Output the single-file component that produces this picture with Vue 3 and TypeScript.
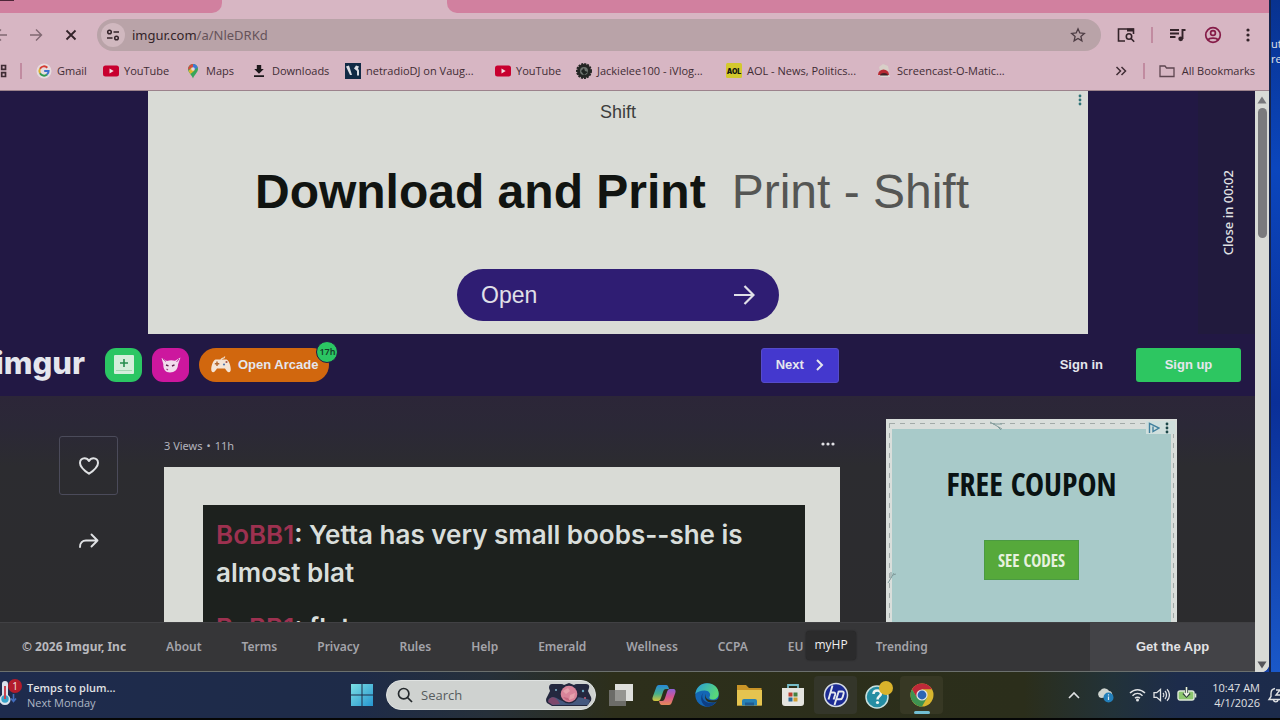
<script setup lang="ts">
import { ref } from 'vue'

interface Bookmark {
  icon: string
  label: string
}

const address = ref<string>('')
const query = ref<string>('')

const bookmarks: Bookmark[] = [
  { icon: 'google', label: 'Gmail' },
  { icon: 'youtube', label: 'YouTube' },
  { icon: 'maps', label: 'Maps' },
  { icon: 'download', label: 'Downloads' },
  { icon: 'netradio', label: 'netradioDJ on Vaug...' },
  { icon: 'youtube', label: 'YouTube' },
  { icon: 'vlog', label: 'Jackielee100 - iVlog...' },
  { icon: 'aol', label: 'AOL - News, Politics...' },
  { icon: 'screencast', label: 'Screencast-O-Matic...' },
]

const footerLinks: string[] = [
  'About', 'Terms', 'Privacy', 'Rules', 'Help', 'Emerald', 'Wellness', 'CCPA', 'EU', 'Trending',
]
</script>

<template>
  <div class="desktop">
    <div class="workspace">
      <section class="browser">
        <div class="tabs">
          <div class="tab tab-left"><span class="tab-mark"></span></div>
          <div class="tab-active"></div>
          <div class="tab tab-rest"></div>
        </div>

        <div class="toolbar">
          <button class="tool back dim" aria-label="Back">
            <svg width="16" height="16" viewBox="0 0 16 16" fill="none" stroke="currentColor" stroke-width="1.4"><path d="M14 8H3M8 2.500L2.500 8L8 13.500" /></svg>
          </button>
          <button class="tool dim" aria-label="Forward">
            <svg width="16" height="16" viewBox="0 0 16 16" fill="none" stroke="currentColor" stroke-width="1.4"><path d="M2 8h11M8 2.500L13.500 8L8 13.500" /></svg>
          </button>
          <button class="tool" aria-label="Stop loading">
            <svg width="14" height="14" viewBox="0 0 14 14" fill="none" stroke="currentColor" stroke-width="1.800"><path d="M2.500 2.500l9 9M11.500 2.500l-9 9" /></svg>
          </button>
          <div class="omnibox">
            <button class="site-info" aria-label="Site information">
              <svg width="14" height="14" viewBox="0 0 14 14" fill="none" stroke="currentColor" stroke-width="1.500"><circle cx="3.500" cy="4" r="1.800" /><path d="M7.500 4H13M1 10h5.500" /><circle cx="10.500" cy="10" r="1.800" /></svg>
            </button>
            <label class="url">
              <span class="url-text">imgur.com<i>/a/NleDRKd</i></span>
              <input v-model="address" type="text" aria-label="Address and search bar" />
            </label>
            <button class="star" aria-label="Bookmark this page">
              <svg width="16" height="16" viewBox="0 0 16 16" fill="none" stroke="currentColor" stroke-width="1.300" stroke-linejoin="miter"><path d="M8 1.800l1.800 4.200 4.500.4-3.400 3 1 4.500L8 11.500l-3.900 2.400 1-4.500-3.400-3 4.500-.4z" /></svg>
            </button>
          </div>
          <button class="tool lens" aria-label="Search this page">
            <svg width="18" height="16" viewBox="0 0 18 16" fill="none" stroke="currentColor" stroke-width="1.600"><path d="M8 14H1.500V2H16.500V7" /><path d="M10 1.500h7v3h-7z" fill="currentColor" stroke="none" /><circle cx="12" cy="9.500" r="2.700" /><path d="M14 11.500l3.200 3.200" /></svg>
          </button>
          <span class="divider"></span>
          <button class="tool" aria-label="Media controls">
            <svg width="17" height="14" viewBox="0 0 17 14" fill="none" stroke="currentColor" stroke-width="1.900"><path d="M1 2h9M1 5.500h9M1 9h5.500M13.500 11V2h3" /><circle cx="11.700" cy="10.800" r="2.400" fill="currentColor" stroke="none" /></svg>
          </button>
          <button class="tool profile" aria-label="Profile">
            <svg width="18" height="18" viewBox="0 0 18 18" fill="none" stroke="currentColor" stroke-width="1.700"><circle cx="9" cy="9" r="7.300" /><circle cx="9" cy="7" r="2.400" /><path d="M4 14c1.500-2.500 8.500-2.500 10 0" /></svg>
          </button>
          <button class="tool" aria-label="Menu">
            <svg width="4" height="16" viewBox="0 0 4 16" fill="currentColor"><circle cx="2" cy="3" r="1.600" /><circle cx="2" cy="8" r="1.600" /><circle cx="2" cy="13" r="1.600" /></svg>
          </button>
        </div>

        <nav class="bookmarks">
          <button class="apps" aria-label="Apps">
            <svg width="14" height="14" viewBox="0 0 14 14" fill="none" stroke="currentColor" stroke-width="1.700"><path d="M1.500 1.500h3.800v3.800H1.500zM8.700 1.500h3.800v3.800H8.700zM1.500 8.700h3.800v3.800H1.500zM8.700 8.700h3.800v3.800H8.700z" /></svg>
          </button>
          <span class="divider first"></span>
          <div class="marks">
            <a v-for="(b, i) in bookmarks" :key="i" href="#" class="mark">
              <svg v-if="b.icon === 'google'" width="16" height="16" viewBox="0 0 16 16"><circle cx="8" cy="8" r="7.500" fill="#e6dcdf" /><g fill="none" stroke-width="2"><path d="M11.300 4.700A4.600 4.600 0 0 0 4 5.700" stroke="#d53b32" /><path d="M4 5.700a4.600 4.600 0 0 0 0 4.600" stroke="#dfb12c" /><path d="M4 10.300a4.600 4.600 0 0 0 7 1.200" stroke="#2f9a50" /><path d="M11 11.500A4.500 4.500 0 0 0 12.600 8H8.200" stroke="#3b72d0" /></g></svg>
              <svg v-else-if="b.icon === 'youtube'" width="16" height="16" viewBox="0 0 16 16"><rect x="0" y="2.500" width="16" height="11" rx="2.500" fill="#c8002f" /><path d="M6.500 5.500v5L10.700 8z" fill="#f1dfe2" /></svg>
              <svg v-else-if="b.icon === 'maps'" width="16" height="16" viewBox="0 0 16 16"><path d="M8 15.500C7 12 3 9.500 3 6a5 5 0 0 1 10 0c0 3.500-4 6-5 9.500z" fill="#36a55a" /><path d="M3.200 7A5 5 0 0 1 8 1v3z" fill="#d74a3d" /><path d="M8 1a5 5 0 0 1 4.700 3.500L8 8z" fill="#3f78d4" /><path d="M3.500 8l3-3.500 3 3L5.500 11z" fill="#dfb72e" /><circle cx="8" cy="6" r="1.800" fill="#e9d8dd" /></svg>
              <svg v-else-if="b.icon === 'download'" width="16" height="16" viewBox="0 0 16 16" fill="#1d191c"><path d="M5.800 2h4.400v4h2.600L8 10.800 3.200 6h2.600zM3 12.300h10V14H3z" /></svg>
              <svg v-else-if="b.icon === 'netradio'" width="16" height="16" viewBox="0 0 16 16"><path d="M0 0h16v16H0z" fill="#102a45" /><path d="M1 3.500l3-1 3 9.500H5zM9 5.500l2-3 3 1-1 2 1 2v5h-2V8z" fill="#d9dce2" /></svg>
              <svg v-else-if="b.icon === 'vlog'" width="16" height="16" viewBox="0 0 16 16"><circle cx="8" cy="8" r="7" fill="#252725" stroke="#252725" stroke-width="2" stroke-dasharray="2 1" /><circle cx="8" cy="8" r="4" fill="#6e7570" /><path d="M5 8l3-3 1 3 3 1-4 3z" fill="#202522" /></svg>
              <svg v-else-if="b.icon === 'aol'" width="16" height="16" viewBox="0 0 16 16"><rect width="16" height="15" rx="1.500" fill="#d3c92d" /><text x="8" y="10.500" text-anchor="middle" class="aol-text">AOL</text></svg>
              <svg v-else width="16" height="16" viewBox="0 0 16 16"><path d="M3 4l4-3 5 2 1 5H4z" fill="#d8cfc8" /><path d="M2 12a5.500 5.500 0 0 1 11 0z" fill="#b82932" /><path d="M4 13a4 3 0 0 1 8 0z" fill="#402226" /><path d="M3 12.500h11V14H5z" fill="#d9d6d2" /></svg>
              <span>{{ b.label }}</span>
            </a>
          </div>
          <button class="more" aria-label="More bookmarks">
            <svg width="12" height="10" viewBox="0 0 12 10" fill="none" stroke="currentColor" stroke-width="1.500"><path d="M1.500 1l4 4-4 4M6.500 1l4 4-4 4" /></svg>
          </button>
          <span class="divider"></span>
          <a href="#" class="mark all">
            <svg width="16" height="14" viewBox="0 0 16 14" fill="none" stroke="#5e4650" stroke-width="1.300"><path d="M1 2h5l1.500 2H15v8.500H1z" /></svg>
            <span>All Bookmarks</span>
          </a>
        </nav>

        <div class="viewport">
          <main class="page">
            <div class="banner">
              <div class="ad">
                <span class="ad-brand">Shift</span>
                <svg class="ad-menu" width="4" height="12" viewBox="0 0 4 12" fill="#2f7377"><circle cx="2" cy="2" r="1.400" /><circle cx="2" cy="6" r="1.400" /><circle cx="2" cy="10" r="1.400" /></svg>
                <h2><b>Download and Print</b><span>Print - Shift</span></h2>
                <button class="open">
                  <span>Open</span>
                  <svg width="22" height="20" viewBox="0 0 22 20" fill="none" stroke="currentColor" stroke-width="2.200"><path d="M1 10h19M11.500 1l9 9-9 9" /></svg>
                </button>
              </div>
              <div class="close-panel"><button class="close-ad">Close in 00:02</button></div>
            </div>

            <header class="site-nav">
              <a href="#" class="logo">imgur</a>
              <button class="square post-new" aria-label="New post">
                <svg width="20" height="20" viewBox="0 0 20 20"><rect width="20" height="19" rx="1" fill="#d4eedb" /><path d="M10 4v8M6 8h8" stroke="#258c4d" stroke-width="1.600" /><path d="M2 15.500h16" stroke="#a6d6b4" /></svg>
              </button>
              <button class="square cat" aria-label="Pets">
                <svg width="20" height="16" viewBox="0 0 20 16"><path d="M.5 1l5.500 3c2.500-1 5.500-1 8-.2L19.500.5 17 7.500c0 5-3.500 8-8 8S2 12 2.300 7z" fill="#f1dcec" /><path d="M5 8l2.500.8M11 9l2.500-1.200" stroke="#62224f" stroke-width="1.400" /><path d="M5.500 12l1.500 1" stroke="#8f4b80" stroke-width="1.100" /><path d="M2 2l3 2.500M18 2l-2.500 3" stroke="#b53b9d" /></svg>
              </button>
              <button class="arcade">
                <svg width="20" height="18" viewBox="0 0 20 18"><path d="M10 4c0-3 4-1 3.500-3.500" fill="none" stroke="#f2dec9" stroke-width="1.300" /><path d="M4.500 3.500h11c3 1 5 9 4 11.500-1.500 3-4 0-5.500-2.500H6C4.500 15 2 18 .5 15-.5 12.500 1.500 4.500 4.500 3.500z" fill="#f4e4d6" /><path d="M6 5.500v4.500M3.800 7.700h4.500" stroke="#b36931" stroke-width="1.500" /><circle cx="13" cy="8.500" r="1.100" fill="#5276ad" /><circle cx="15.500" cy="6" r="1.100" fill="#a85549" /></svg>
                <span>Open Arcade</span>
                <em>17h</em>
              </button>
              <button class="next">Next
                <svg width="8" height="12" viewBox="0 0 8 12" fill="none" stroke="currentColor" stroke-width="2"><path d="M1 1l5 5-5 5" /></svg>
              </button>
              <a href="#" class="sign-in">Sign in</a>
              <button class="sign-up">Sign up</button>
            </header>

            <div class="content">
              <aside class="engage">
                <button class="heart" aria-label="Favorite">
                  <svg width="22" height="20" viewBox="0 0 22 20" fill="none" stroke="currentColor" stroke-width="2" stroke-linejoin="round"><path d="M11 17.800C7 15 2 11.300 2 6.900 2 4.200 4 2.200 6.500 2.200c2 0 3.500 1.100 4.500 2.800 1-1.700 2.500-2.800 4.500-2.800C18 2.200 20 4.200 20 6.900c0 4.400-5 8.100-9 10.900z" /></svg>
                </button>
                <button class="share" aria-label="Share">
                  <svg width="20" height="16" viewBox="0 0 20 16" fill="none" stroke="currentColor" stroke-width="1.900" stroke-linecap="round" stroke-linejoin="round"><path d="M1 14c0-4 2.500-6.500 6-6.500h11.500M12.500 1.500l6 6-6 6" /></svg>
                </button>
              </aside>
              <article class="post">
                <div class="meta">
                  <span class="stats"><span>3 Views</span><span>•</span><span>11h</span></span>
                  <button class="dots" aria-label="Post options"><svg width="14" height="4" viewBox="0 0 14 4" fill="currentColor"><circle cx="2" cy="2" r="1.600" /><circle cx="7" cy="2" r="1.600" /><circle cx="12" cy="2" r="1.600" /></svg></button>
                </div>
                <div class="frame">
                  <div class="chat">
                    <p><b>BoBB1</b>: Yetta has very small boobs--she is almost blat</p>
                    <p><b>BoBB1</b>: flat</p>
                  </div>
                </div>
              </article>
              <aside class="coupon">
                <svg class="scissor top" width="16" height="10" viewBox="0 0 16 10" fill="none" stroke="#819c9c"><path d="M1 1l12 7M4 3l9 0M9 6l3 3" /></svg>
                <svg class="scissor side" width="10" height="16" viewBox="0 0 10 16" fill="none" stroke="#819c9c"><path d="M1 14l6-10M4 9V3M6 6l3-1" /></svg>
                <div class="choices">
                  <svg width="12" height="12" viewBox="0 0 12 12" fill="none" stroke="#42809e" stroke-width="1.400"><path d="M1.500 11V1.300L11 6 5 9.500V4.500" /></svg>
                  <svg width="4" height="12" viewBox="0 0 4 12" fill="#1c4648"><circle cx="2" cy="2" r="1.400" /><circle cx="2" cy="6" r="1.400" /><circle cx="2" cy="10" r="1.400" /></svg>
                </div>
                <div class="coupon-body">
                  <strong>FREE COUPON</strong>
                  <button>SEE CODES</button>
                </div>
              </aside>
            </div>

            <footer class="footer">
              <span class="copyright">© 2026 Imgur, Inc</span>
              <a v-for="l in footerLinks" :key="l" href="#" :class="{ eu: l === 'EU' }">{{ l }}</a>
              <button class="get-app">Get the App</button>
            </footer>
          </main>
          <div class="scrollbar">
            <svg width="10" height="8" viewBox="0 0 10 8" fill="#77777b"><path d="M5 0.500l4.500 7h-9z" /></svg>
            <span class="thumb"></span>
            <svg width="10" height="8" viewBox="0 0 10 8" fill="#55555a"><path d="M5 7.500l4.500-7h-9z" /></svg>
          </div>
        </div>
      </section>
      <div class="wallpaper"><span>ut</span><span>re</span></div>
    </div>

    <footer class="taskbar">
      <button class="weather">
        <svg width="24" height="28" viewBox="0 0 24 28"><path d="M2 5a3 3 0 0 1 6 0v11a5.500 5.500 0 1 1-6 0z" fill="#dbe2eb" /><circle cx="5" cy="20" r="3.700" fill="#37a3c9" /><path d="M5 20V7" stroke="#c74450" stroke-width="2" /><path d="M13.500 15v7M11 19.500l2.500 3 2.500-3" fill="none" stroke="#416cbd" stroke-width="1.600" /><circle cx="15" cy="7" r="7" fill="#b31c2b" /><text x="15" y="11" text-anchor="middle" class="badge-text">1</text></svg>
        <span><b>Temps to plum...</b><small>Next Monday</small></span>
      </button>
      <button class="app" aria-label="Start">
        <svg width="22" height="22" viewBox="0 0 22 22"><defs><linearGradient id="win" x1="0" y1="0" x2="1" y2="1"><stop offset="0" stop-color="#7ce0e4" /><stop offset="1" stop-color="#2695cf" /></linearGradient></defs><path d="M0 0h10.500v10.500H0zM11.500 0H22v10.500H11.500zM0 11.500h10.500V22H0zM11.500 11.500H22V22H11.500z" fill="url(#win)" /></svg>
      </button>
      <label class="search">
        <svg width="16" height="16" viewBox="0 0 16 16" fill="none" stroke="#252a2d" stroke-width="1.700"><circle cx="6.700" cy="6.700" r="5.200" /><path d="M10.500 10.500l4.500 4.500" /></svg>
        <input v-model="query" type="text" placeholder="Search" aria-label="Search" />
        <svg width="46" height="24" viewBox="0 0 46 24"><path d="M6 1h9q2 0 3 1l5-2 5 2q1-1 3-1h9q4 0 3 4l-1 3 3 6q1 3-1 5l-3 4H6l-5-3q-2-3 0-6l3-6-1-3q0-4 3-4z" fill="#24283f" /><path d="M2 17c8-8 12 5 20 0s15-2 22 0l-2 5H6z" fill="#45597f" /><path d="M3 16c5-4 8 0 11 5l-7 1-5-3z" fill="#7d486c" /><circle cx="10" cy="7" r="1" fill="#7fb5cc" /><circle cx="37" cy="8" r="1.200" fill="#6aaac6" /><circle cx="39" cy="15" r="1" fill="#c75b76" /><circle cx="23" cy="11" r="9.500" fill="#24283f" /><circle cx="23" cy="11" r="8.300" fill="#d8849a" /><path d="M17 8l5-3 2 3-4 3zM24 12l5-2-1 5-5 2z" fill="#e5a1ac" /><path d="M17 14l5 1 2 3-4-1z" fill="#c4667f" /></svg>
      </label>
      <button class="app" aria-label="Task view">
        <svg width="24" height="22" viewBox="0 0 24 22"><path d="M6 0h18v17H6z" fill="#dedfdc" /><path d="M0 6h17v16H0z" fill="#6c6c68" /><path d="M6 6h11v11H6z" fill="#959591" /></svg>
      </button>
      <button class="app" aria-label="Copilot">
        <svg width="24" height="22" viewBox="0 0 24 22"><defs><linearGradient id="cpa" x1="0" y1="0" x2="0" y2="1"><stop offset="0" stop-color="#2688d8" /><stop offset=".55" stop-color="#46b08a" /><stop offset="1" stop-color="#d6c43b" /></linearGradient><linearGradient id="cpb" x1="0" y1="0" x2="0" y2="1"><stop offset="0" stop-color="#8c60d7" /><stop offset=".5" stop-color="#d65591" /><stop offset="1" stop-color="#e58b58" /></linearGradient></defs><path d="M7 1h7c2 0 2.500 2 3 4h-3c-2 0-2.500 1.500-3 3l-2 6c-.6 2-1.500 3-3 3H3c-2.500 0-3-2-2.300-4L4 4c.6-2 1.500-3 3-3z" fill="url(#cpa)" /><path d="M17 21h-7c-2 0-2.500-2-3-4h3c2 0 2.500-1.500 3-3l2-6c.6-2 1.500-3 3-3h3c2.500 0 3 2 2.300 4L20 18c-.6 2-1.500 3-3 3z" fill="url(#cpb)" /></svg>
      </button>
      <button class="app" aria-label="Edge">
        <svg width="24" height="24" viewBox="0 0 24 24"><defs><linearGradient id="edge" x1="0" y1="0" x2="1" y2=".4"><stop offset="0" stop-color="#289bdc" /><stop offset="1" stop-color="#58d879" /></linearGradient></defs><circle cx="12" cy="12" r="11.700" fill="#1466b5" /><path d="M.4 11C1.500 4 6 .3 12 .3c7 0 11.700 4.700 11.700 10.200 0 4-3 6-6 6-3 0-4-1.500-3-3 1.500-3-1-6-5-6C5.500 7.500 2 9 .4 11z" fill="url(#edge)" /><path d="M9 9c-4 4-1 11 7 11 2 0 4-.5 5.500-1.500C19 22 15.500 23.700 12 23.700 6 22 4 13 9 9z" fill="#0e3e83" /><path d="M11 11c-1.500 4 2 7.500 10.500 6l1.800-1.500-.5 2.500c-4 2.500-11 2-12.300-2-.6-2-.3-4 .5-5z" fill="#2a2e1d" /></svg>
      </button>
      <button class="app" aria-label="File Explorer">
        <svg width="25" height="22" viewBox="0 0 25 22"><path d="M0 1h9l3 3h12.500v17.500H0z" fill="#c99427" /><path d="M0 6h25v15.500H0z" fill="#e5c450" /><path d="M5 17q0-2 2-2h11q2 0 2 2v4.500H5z" fill="#2781b5" /><path d="M8 18.500h9v3H8z" fill="#205b91" /></svg>
      </button>
      <button class="app" aria-label="Microsoft Store">
        <svg width="24" height="24" viewBox="0 0 24 24"><path d="M7 6V2h10v4" fill="none" stroke="#77bdc9" stroke-width="1.800" /><path d="M1 5h22v15q0 3-3 3H4q-3 0-3-3z" fill="#e4e4df" /><path d="M7.500 9.500h4v4h-4z" fill="#bd3e2e" /><path d="M12.500 9.500h4v4h-4z" fill="#458042" /><path d="M7.500 14.500h4v4h-4z" fill="#286b98" /><path d="M12.500 14.500h4v4h-4z" fill="#ce9f32" /></svg>
      </button>
      <button class="app hp" aria-label="myHP">
        <svg width="26" height="26" viewBox="0 0 26 26"><circle cx="13" cy="13" r="11.500" fill="#1c2b94" stroke="#d6dce5" stroke-width="1.500" /><path d="M9.500 3.500L5.500 17.500M8 10.500h2.500c1.500 0 2 .8 1.600 2.200L10.600 17.500M15.800 9L11.500 23M15.500 9.500h3.500c1.500 0 2 .8 1.600 2.200l-1 3.600c-.4 1.400-1.300 2-2.600 2h-3.500" fill="none" stroke="#e4e8ee" stroke-width="1.900" /></svg>
        <span class="tip">myHP</span>
      </button>
      <button class="app" aria-label="Help">
        <svg width="28" height="28" viewBox="0 0 28 28"><circle cx="12" cy="16" r="11" fill="#248da3" stroke="#c8e0df" stroke-width="1.500" /><path d="M8.500 13c0-5 7.500-4.500 7.500-.5 0 3-3.500 2.500-3.500 6" fill="none" stroke="#eef4f2" stroke-width="2.500" /><circle cx="12.500" cy="21.500" r="1.600" fill="#eef4f2" /><circle cx="21" cy="7" r="7" fill="#dab32b" /></svg>
      </button>
      <button class="app current" aria-label="Chrome">
        <svg width="24" height="24" viewBox="0 0 24 24"><circle cx="12" cy="12" r="11.500" fill="#d8b62e" /><path d="M2 6.300A11.500 11.500 0 0 1 22 6.300H12L7 15z" fill="#bf2939" /><path d="M2 6.300A11.500 11.500 0 0 0 12 23.500l5-8.700H7z" fill="#3e9251" /><circle cx="12" cy="12" r="5.600" fill="#e3e6e6" /><circle cx="12" cy="12" r="4.400" fill="#2d66b4" /></svg>
      </button>
      <div class="tray">
        <button aria-label="Show hidden icons"><svg width="12" height="8" viewBox="0 0 12 8" fill="none" stroke="currentColor" stroke-width="1.600"><path d="M1 7l5-5 5 5" /></svg></button>
        <button class="cloud" aria-label="OneDrive"><svg width="17" height="16" viewBox="0 0 17 16"><path d="M4 11a4 4 0 0 1-.5-7.500A5 5 0 0 1 12 4c3 0 4.500 4 2 6z" fill="#cfd4cf" /><circle cx="11.500" cy="10.500" r="5" fill="#237fba" /><path d="M11.500 9.500V13M11.500 7.300v1.200" stroke="#e1e9ee" stroke-width="1.200" /></svg></button>
        <button aria-label="Network"><svg width="17" height="14" viewBox="0 0 17 14" fill="none" stroke="currentColor" stroke-width="1.500"><path d="M1 5c4.500-4.500 10.500-4.500 15 0M3.500 7.700c3-3 7-3 10 0M6 10.300c1.500-1.500 3.500-1.500 5 0" /><circle cx="8.500" cy="12" r="1.500" fill="currentColor" stroke="none" /></svg></button>
        <button aria-label="Volume"><svg width="17" height="14" viewBox="0 0 17 14" fill="none" stroke="currentColor" stroke-width="1.300"><path d="M1 4.700h2.700L7.500 1.500v11L3.700 9.300H1zM10 5c1 1 1 3 0 4M12 3c2 2 2 6 0 8M14 1.200c3.200 3 3.200 8.600 0 11.600" /></svg></button>
        <button class="battery" aria-label="Battery"><svg width="20" height="16" viewBox="0 0 20 16"><rect x="1" y="4" width="16" height="9" rx="2" fill="#8cc66f" stroke="#dde9d7" stroke-width="1.400" /><path d="M18.500 6.500v4" stroke="#dde9d7" stroke-width="1.600" /><path d="M9.500 0v9M6.500 6l3 3 3-3" fill="none" stroke="#2b3d38" stroke-width="3" /><path d="M9.500 0v8M7 5.500l2.500 3 2.500-3" fill="none" stroke="#eff3e9" stroke-width="1.500" /></svg></button>
        <button class="clock"><span>10:47 AM</span><span>4/1/2026</span></button>
        <button class="bell" aria-label="Notifications"><svg width="18" height="18" viewBox="0 0 18 18" fill="none" stroke="currentColor" stroke-width="1.400"><path d="M8 2.500C5 3 4 5 4 7.500v3L2 13.500h13l-1.500-3M6.500 14c.5 2.500 4 2.500 4.500 0M9 4h4l-4 5h4M14 2h3l-3 3.500h3" /></svg></button>
      </div>
    </footer>
  </div>
</template>

<style>
html,
body {
  margin: 0;
  background: #000;
}
</style>

<style scoped>
.desktop {
  display: flex;
  flex-direction: column;
  height: 100vh;
  min-height: 480px;
  overflow: hidden;
  font-family: "Open Sans", "Noto Sans", sans-serif;
  color: #e0e2e4;
}
.desktop * {
  box-sizing: border-box;
}
button {
  padding: 0;
  border: 0;
  background: none;
  color: inherit;
  font: inherit;
}
a {
  color: inherit;
  text-decoration: none;
}
svg {
  display: block;
  flex: none;
}
input {
  min-width: 0;
  padding: 0;
  border: 0;
  outline: 0;
  background: none;
  font: inherit;
}
.workspace {
  display: flex;
  flex: 1;
  min-height: 0;
  background: #123fa4;
}
.browser {
  display: flex;
  flex: 1;
  flex-direction: column;
  min-width: 0;
  background: #d7b6c3;
  border-bottom-right-radius: 8px;
  overflow: hidden;
}
.wallpaper {
  display: flex;
  flex-direction: column;
  width: 11px;
  padding-top: 36px;
  border-left: 2px solid #14234a;
  background: linear-gradient(#08328f, #0b46bd 25%, #0a2f98 60%, #1a58c8);
  overflow: hidden;
  font-size: 11px;
  line-height: 15px;
}

.tabs {
  display: flex;
  height: 13px;
}
.tab {
  background: #d1809f;
}
.tab-left {
  width: 222px;
  border-bottom-right-radius: 10px;
}
.tab-mark {
  display: block;
  width: 14px;
  height: 1px;
  background: #4e2638;
}
.tab-active {
  width: 225px;
}
.tab-rest {
  flex: 1;
  border-bottom-left-radius: 10px;
}

.toolbar {
  display: flex;
  align-items: center;
  height: 44px;
  padding-right: 4px;
  color: #332329;
}
.tool {
  display: grid;
  place-items: center;
  width: 35px;
  height: 32px;
}
.back {
  margin-left: -17px;
}
.dim {
  color: #806872;
}
.omnibox {
  display: flex;
  flex: 1;
  align-items: center;
  height: 32px;
  margin: 0 7px 0 9px;
  padding: 0 15px 0 4px;
  border-radius: 16px;
  background: #b9a3a8;
}
.site-info {
  display: grid;
  place-items: center;
  width: 24px;
  height: 24px;
  border-radius: 50%;
  background: #d0b8bf;
}
.url {
  display: flex;
  flex: 1;
  margin-left: 7px;
  font: 13px/20px "Noto Sans", sans-serif;
}
.url input {
  flex: 1;
}
.url i {
  font-style: normal;
  color: #66535a;
}
.star {
  color: #4d3c43;
}
.divider {
  width: 2px;
  height: 16px;
  margin: 0 7px 0 8px;
  background: #c18ba0;
}
.profile {
  color: #851b48;
}

.bookmarks {
  display: flex;
  align-items: center;
  height: 34px;
  padding: 0 14px 6px 0;
  border-bottom: 1px solid #9c828c;
  font: 11px/16px "Open Sans", "Noto Sans", sans-serif;
  color: #3f2c34;
}
.apps {
  margin-left: -7px;
}
.divider.first {
  margin: 0 14px 0 13px;
}
.marks {
  display: grid;
  grid-template-columns: 67px 82px 66px 94px 150px 81px 150px 150px auto;
  flex: 1;
}
.mark {
  display: flex;
  align-items: center;
  gap: 5px;
  white-space: nowrap;
}
.all {
  gap: 7px;
  margin-left: 7px;
}
.more {
  margin-right: 8px;
}
.aol-text {
  font: 900 7px "Inter", sans-serif;
  fill: #171710;
}

.viewport {
  display: flex;
  flex: 1;
  min-height: 0;
  background: #d8dad6;
}
.page {
  display: flex;
  flex: 1;
  flex-direction: column;
  min-width: 0;
  background: #2c2c2f;
}
.scrollbar {
  display: flex;
  flex-direction: column;
  align-items: center;
  width: 14px;
  padding: 5px 0 3px;
  background: #d8dad6;
}
.thumb {
  width: 9px;
  height: 130px;
  margin: 4px 0 auto;
  border-radius: 5px;
  background: #7a7a7d;
}

.banner {
  display: grid;
  grid-template-columns: 148px 1fr 110px 57px;
  height: 243px;
  background: #221844;
}
.ad {
  position: relative;
  display: flex;
  grid-column: 2;
  flex-direction: column;
  align-items: center;
  height: 243px;
  padding-top: 9px;
  background: #d9dbd6;
  font-family: "Liberation Sans", sans-serif;
  color: #3c3d3c;
}
.ad-brand {
  font-size: 18px;
  line-height: 24px;
}
.ad-menu {
  position: absolute;
  top: 3px;
  right: 6px;
}
.ad h2 {
  display: flex;
  gap: 26px;
  margin: 38px 0 0;
  padding-right: 12px;
  font-size: 48px;
  font-weight: 400;
  line-height: 60px;
  white-space: nowrap;
  color: #555654;
}
.ad h2 b {
  color: #111411;
}
.open {
  display: flex;
  align-items: center;
  justify-content: space-between;
  width: 322px;
  height: 52px;
  margin-top: 47px;
  padding: 0 24px;
  border-radius: 26px;
  background: #2f1d73;
  font-size: 23px;
  color: #e0e0e8;
}
.close-panel {
  display: grid;
  grid-column: 4;
  place-items: center;
  padding-left: 2px;
  background: #211a3d;
}
.close-ad {
  writing-mode: vertical-rl;
  transform: rotate(180deg);
  font: 500 13px/16px "Noto Sans", sans-serif;
}

.site-nav {
  display: flex;
  align-items: center;
  height: 62px;
  padding-right: 14px;
  background: #221844;
  font: 700 13px/20px "Liberation Sans", sans-serif;
  color: #e5e6ed;
}
.logo {
  width: 90px;
  margin: 0 20px 4px -5px;
  font: 800 31px/40px "Inter", sans-serif;
}
.square {
  display: grid;
  place-items: center;
  width: 37px;
  height: 34px;
  margin-right: 10px;
  border-radius: 11px;
}
.post-new {
  background: #2bc663;
}
.cat {
  background: #cc179e;
}
.arcade {
  position: relative;
  display: flex;
  align-items: center;
  gap: 7px;
  height: 34px;
  padding: 0 11px 0 12px;
  border-radius: 17px;
  background: #d1670e;
  white-space: nowrap;
}
.arcade em {
  position: absolute;
  top: -7px;
  right: -9px;
  width: 22px;
  height: 22px;
  border: 1px solid #221844;
  border-radius: 50%;
  background: #2bc663;
  font: 600 9px/20px "Noto Sans", sans-serif;
  color: #14402a;
}
.next {
  display: flex;
  align-items: center;
  justify-content: space-between;
  width: 78px;
  height: 35px;
  margin: 0 221px 0 auto;
  padding: 0 14px;
  border: 1px solid #554bca;
  border-radius: 3px;
  background: #4438ce;
}
.sign-in {
  margin-right: 33px;
}
.sign-up {
  width: 105px;
  height: 34px;
  border-radius: 3px;
  background: #2dc661;
}

.content {
  display: grid;
  grid-template-columns: 59px 1fr 291px;
  flex: 1;
  gap: 0 46px;
  min-height: 0;
  padding: 23px 78px 0 59px;
  background: linear-gradient(#2c2638, #2b2837 30px, #2c2c30 70px, #2c2c2e);
  overflow: hidden;
}
.engage {
  display: flex;
  flex-direction: column;
  align-items: center;
  gap: 38px;
  padding-top: 17px;
}
.heart {
  display: grid;
  place-items: center;
  width: 59px;
  height: 59px;
  border: 1px solid #4b4b5a;
  border-radius: 3px;
}
.meta {
  display: flex;
  align-items: center;
  justify-content: space-between;
  height: 48px;
  padding: 6px 5px 0 0;
  font: 11px/16px "Noto Sans", sans-serif;
  color: #b3b3bd;
}
.stats {
  display: flex;
  gap: 4px;
}
.dots {
  margin-bottom: 4px;
  color: #e0e0e4;
}
.frame {
  padding: 38px 35px 0 39px;
  background: #d9dbd6;
}
.chat {
  height: 180px;
  padding: 11px 13px;
  background: #1d211e;
  font: 600 26px/38px "Inter", sans-serif;
  color: #d9dedb;
}
.chat p {
  margin: 0 0 17px;
}
.chat b {
  font-weight: 600;
  color: #9d3150;
}
.coupon {
  position: relative;
  height: 250px;
  padding: 10px 6px 0;
  background:
    repeating-linear-gradient(90deg, #a3aba9 0 5px, transparent 5px 10px) 4px 4px / 283px 1px no-repeat,
    repeating-linear-gradient(#a3aba9 0 5px, transparent 5px 10px) 3px 4px / 1px 246px no-repeat,
    repeating-linear-gradient(#a3aba9 0 5px, transparent 5px 10px) 287px 4px / 1px 246px no-repeat,
    #d9dedb;
}
.coupon-body {
  display: flex;
  flex-direction: column;
  align-items: center;
  height: 240px;
  padding-top: 35px;
  background: #a8cac9;
  font-family: "Noto Sans ExtraCondensed", "Open Sans Condensed", "Roboto Condensed", "Noto Sans Condensed", "Noto Sans CJK SC", sans-serif;
  font-weight: 700;
}
.coupon strong {
  font-size: 32px;
  line-height: 40px;
  color: #0a1313;
}
.coupon button {
  width: 95px;
  height: 40px;
  margin-top: 36px;
  border: 1px solid #4b9a42;
  background: #56a93b;
  font-size: 17px;
  color: #e6f1df;
}
.scissor,
.choices {
  position: absolute;
}
.top {
  top: 2px;
  left: 103px;
}
.side {
  top: 150px;
  left: 1px;
}
.choices {
  top: 2px;
  right: 2px;
  display: flex;
  align-items: center;
  gap: 5px;
  width: 29px;
  height: 13px;
  padding-left: 2px;
  background: #d0dfdd;
}

.footer {
  display: flex;
  align-items: center;
  gap: 40px;
  height: 50px;
  padding-left: 22px;
  border-top: 1px solid #414144;
  border-bottom: 1px solid #6b706e;
  background: #363638;
  font: 600 12px/18px "Noto Sans", sans-serif;
  white-space: nowrap;
  color: #a4a4aa;
}
.copyright {
  font-weight: 700;
  color: #b9b9be;
}
.eu {
  width: 48px;
}
.get-app {
  align-self: stretch;
  width: 165px;
  margin-left: auto;
  background: #434347;
  font: 700 13px/18px "Liberation Sans", sans-serif;
  color: #e2e2e5;
}

.taskbar {
  display: flex;
  align-items: center;
  height: 48px;
  border-bottom: 2px solid #050606;
  background: linear-gradient(90deg, #1e2b4d, #1e2b48 28%, #26303a 38%, #2d2f1b 48%, #2b2e1b 80%, #223239 87%, #1d2c4b 92%, #1c2b4b);
}
.weather {
  display: flex;
  align-items: center;
  gap: 3px;
  width: 340px;
  text-align: left;
}
.weather > svg {
  margin-bottom: 4px;
}
.weather b,
.weather small {
  display: block;
  font-size: 11px;
  font-weight: 400;
  line-height: 15px;
}
.weather b {
  font-weight: 600;
}
.weather small {
  color: #aeb7c5;
}
.badge-text {
  font: 10px "Noto Sans", sans-serif;
  fill: #f0dede;
}
.app {
  display: grid;
  place-items: center;
  width: 43px;
  height: 38px;
}
.search {
  display: flex;
  align-items: center;
  width: 210px;
  height: 30px;
  margin: 0 3px;
  padding: 0 3px 0 10px;
  border: 1px solid #e0e3e2;
  border-radius: 15px;
  background: #cfd2d0;
}
.search input {
  flex: 1;
  margin-left: 8px;
  font-size: 13px;
  color: #4c5253;
}
.search input::placeholder {
  color: #565c5e;
  opacity: 1;
}
.hp {
  position: relative;
  border-radius: 4px;
  background: #34362a;
}
.tip {
  position: absolute;
  left: -8px;
  bottom: 54px;
  width: 50px;
  height: 29px;
  border-radius: 4px;
  background: #2b2b2c;
  box-shadow: 0 0 2px #1b1b1c;
  font-size: 12px;
  line-height: 27px;
  color: #f0f0f0;
}
.current {
  position: relative;
  border-radius: 4px;
  background: #373824;
}
.current::after {
  content: "";
  position: absolute;
  bottom: 0;
  width: 16px;
  height: 3px;
  border-radius: 2px;
  background: #72bfd3;
}
.tray {
  display: flex;
  align-items: center;
  gap: 7px;
  margin: 0 -5px 0 auto;
}
.cloud {
  margin: 0 8px 0 10px;
}
.battery {
  margin-right: 8px;
}
.clock {
  text-align: right;
  font-size: 11px;
  line-height: 15px;
}
.clock span {
  display: block;
}
</style>
